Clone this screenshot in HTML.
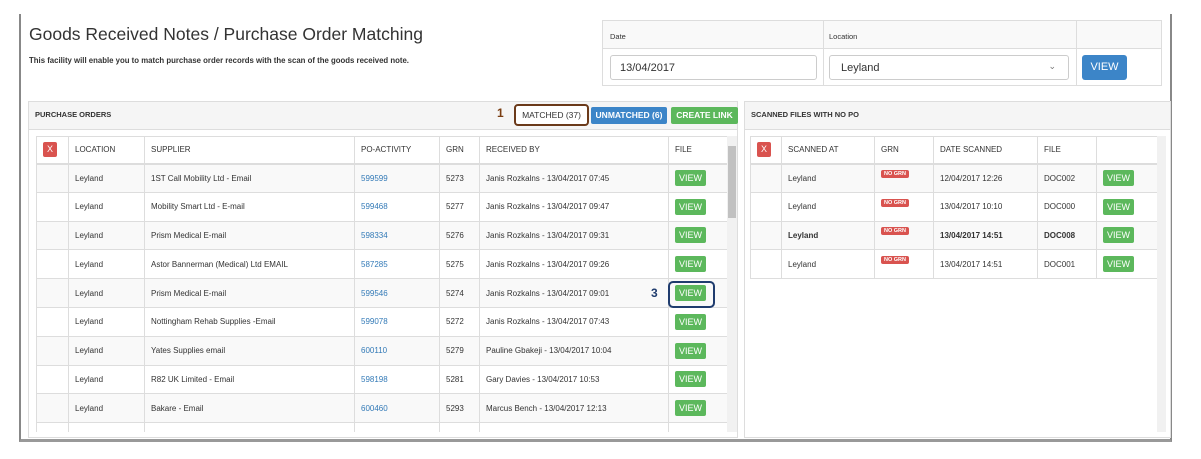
<!DOCTYPE html>
<html><head><meta charset="utf-8"><style>
*{box-sizing:border-box;margin:0;padding:0}
body{width:1201px;height:459px;background:#fff;font-family:"Liberation Sans",Arial,sans-serif;position:relative;overflow:hidden;color:#333}
.abs{position:absolute}
.frame{left:19px;top:14px;width:1153px;height:428px;border-left:2px solid #888;border-right:2px solid #888;border-bottom:3px solid #999}
h1{position:absolute;left:29px;top:24px;font-size:17.5px;font-weight:normal;color:#333}
.sub{left:29px;top:56px;font-size:7.8px;font-weight:bold;color:#333}
table{border-collapse:collapse;position:absolute;table-layout:fixed}
td{border:1px solid #ddd;font-size:8px;padding:0 6px;vertical-align:middle;height:28.8px;white-space:nowrap;overflow:hidden}
th{border:1px solid #ddd;border-bottom:2px solid #ddd;font-size:8px;font-weight:normal;text-align:left;padding:0 6px;height:27px;color:#333}
tr.s td{background:#f9f9f9}
.x{display:inline-block;width:14px;height:15px;background:#d9534f;color:#fff;border-radius:2px;text-align:center;line-height:15px;font-size:9px;font-weight:normal}
.v{display:inline-block;background:#5cb85c;color:#fff;font-size:9px;padding:3px 4px;border-radius:2px;line-height:10px;font-weight:normal}
.a{color:#337ab7}
.ng{display:inline-block;background:#d9534f;color:#fff;font-size:5.5px;font-weight:bold;padding:1px 3px;border-radius:2px;position:relative;top:-5px}
.panel{border:1px solid #ddd}
.ph{background:#f5f5f5;border-bottom:1px solid #ddd;height:28px;font-size:7.5px;font-weight:bold;padding:8px 6px 0}
.btn{position:absolute;font-size:8.5px;height:17px;line-height:17px;text-align:center;border-radius:2px}
</style></head><body>
<div class="abs frame"></div>
<h1>Goods Received Notes / Purchase Order Matching</h1>
<div class="abs sub">This facility will enable you to match purchase order records with the scan of the goods received note.</div>

<div class="abs" style="left:602px;top:20px;width:560px;height:66px;border:1px solid #ddd">
 <div class="abs" style="left:0;top:0;width:558px;height:28px;background:#f9f9f9;border-bottom:1px solid #ddd"></div>
 <div class="abs" style="left:220px;top:0;height:64px;border-left:1px solid #ddd"></div>
 <div class="abs" style="left:473px;top:0;height:64px;border-left:1px solid #ddd"></div>
 <div class="abs" style="left:7px;top:11px;font-size:7.5px">Date</div>
 <div class="abs" style="left:226px;top:11px;font-size:7.5px">Location</div>
 <div class="abs" style="left:7px;top:34px;width:207px;height:25px;border:1px solid #ccc;border-radius:3px;font-size:11px;padding:6px 9px">13/04/2017</div>
 <div class="abs" style="left:226px;top:34px;width:240px;height:25px;border:1px solid #ccc;border-radius:3px;font-size:11px;padding:6px 11px">Leyland<span style="position:absolute;right:12px;top:5px;font-size:9px;color:#777">&#8964;</span></div>
 <div class="abs" style="left:479px;top:34px;width:45px;height:25px;background:#3c85c8;border-radius:3px;color:#fff;font-size:11px;text-align:center;line-height:25px">VIEW</div>
</div>

<div class="abs panel" style="left:28px;top:101px;width:710px;height:337px">
 <div class="ph">PURCHASE ORDERS</div>
</div>
<div class="abs" style="left:497px;top:106px;font-size:12px;font-weight:bold;color:#7a3e12">1</div>
<div class="btn" style="left:514px;top:104px;width:75px;height:22px;line-height:18px;border:2px solid #6b3a1a;border-radius:4px;background:#fff;color:#333">MATCHED (37)</div>
<div class="btn" style="left:591px;top:107px;width:76px;background:#3c85c8;color:#fff;font-weight:bold">UNMATCHED (6)</div>
<div class="btn" style="left:671px;top:107px;width:67px;background:#5cb85c;color:#fff;font-weight:bold">CREATE LINK</div>

<div class="abs" style="left:36px;top:136px;width:701px;height:296px;overflow:hidden">
<table style="left:0;top:0;width:691px">
<colgroup><col style="width:32px"><col style="width:76px"><col style="width:210px"><col style="width:85px"><col style="width:40px"><col style="width:189px"><col style="width:59px"></colgroup>
<tr><th><span class="x">X</span></th><th>LOCATION</th><th>SUPPLIER</th><th>PO-ACTIVITY</th><th>GRN</th><th>RECEIVED BY</th><th>FILE</th></tr>
<tr class="s"><td></td><td>Leyland</td><td>1ST Call Mobility Ltd - Email</td><td class="a">599599</td><td>5273</td><td>Janis Rozkalns - 13/04/2017 07:45</td><td><span class="v">VIEW</span></td></tr>
<tr><td></td><td>Leyland</td><td>Mobility Smart Ltd - E-mail</td><td class="a">599468</td><td>5277</td><td>Janis Rozkalns - 13/04/2017 09:47</td><td><span class="v">VIEW</span></td></tr>
<tr class="s"><td></td><td>Leyland</td><td>Prism Medical E-mail</td><td class="a">598334</td><td>5276</td><td>Janis Rozkalns - 13/04/2017 09:31</td><td><span class="v">VIEW</span></td></tr>
<tr><td></td><td>Leyland</td><td>Astor Bannerman (Medical) Ltd EMAIL</td><td class="a">587285</td><td>5275</td><td>Janis Rozkalns - 13/04/2017 09:26</td><td><span class="v">VIEW</span></td></tr>
<tr class="s"><td></td><td>Leyland</td><td>Prism Medical E-mail</td><td class="a">599546</td><td>5274</td><td>Janis Rozkalns - 13/04/2017 09:01</td><td><span class="v">VIEW</span></td></tr>
<tr><td></td><td>Leyland</td><td>Nottingham Rehab Supplies -Email</td><td class="a">599078</td><td>5272</td><td>Janis Rozkalns - 13/04/2017 07:43</td><td><span class="v">VIEW</span></td></tr>
<tr class="s"><td></td><td>Leyland</td><td>Yates Supplies email</td><td class="a">600110</td><td>5279</td><td>Pauline Gbakeji - 13/04/2017 10:04</td><td><span class="v">VIEW</span></td></tr>
<tr><td></td><td>Leyland</td><td>R82 UK Limited - Email</td><td class="a">598198</td><td>5281</td><td>Gary Davies - 13/04/2017 10:53</td><td><span class="v">VIEW</span></td></tr>
<tr class="s"><td></td><td>Leyland</td><td>Bakare - Email</td><td class="a">600460</td><td>5293</td><td>Marcus Bench - 13/04/2017 12:13</td><td><span class="v">VIEW</span></td></tr>
<tr><td></td><td></td><td></td><td></td><td></td><td></td><td></td></tr>
</table>
<div class="abs" style="left:691px;top:0;width:10px;height:296px;background:#f1f1f1"><div style="margin:10px 1px 0;height:72px;background:#c1c1c1"></div></div>
</div>
<div class="abs" style="left:651px;top:286px;font-size:12px;font-weight:bold;color:#1f3c6e">3</div>
<div class="abs" style="left:668px;top:281px;width:47px;height:27px;border:2px solid #1f3c6e;border-radius:5px"></div>

<div class="abs panel" style="left:744px;top:101px;width:427px;height:337px">
 <div class="ph">SCANNED FILES WITH NO PO</div>
</div>
<div class="abs" style="left:750px;top:136px;width:416px;height:296px;overflow:hidden">
<table style="left:0;top:0;width:407px">
<colgroup><col style="width:31px"><col style="width:93px"><col style="width:59px"><col style="width:104px"><col style="width:59px"><col style="width:61px"></colgroup>
<tr><th><span class="x">X</span></th><th>SCANNED AT</th><th>GRN</th><th>DATE SCANNED</th><th>FILE</th><th></th></tr>
<tr class="s"><td></td><td>Leyland</td><td><span class="ng">NO GRN</span></td><td>12/04/2017 12:26</td><td>DOC002</td><td><span class="v">VIEW</span></td></tr>
<tr><td></td><td>Leyland</td><td><span class="ng">NO GRN</span></td><td>13/04/2017 10:10</td><td>DOC000</td><td><span class="v">VIEW</span></td></tr>
<tr class="s"><td></td><td><b>Leyland</b></td><td><span class="ng">NO GRN</span></td><td><b>13/04/2017 14:51</b></td><td><b>DOC008</b></td><td><span class="v">VIEW</span></td></tr>
<tr><td></td><td>Leyland</td><td><span class="ng">NO GRN</span></td><td>13/04/2017 14:51</td><td>DOC001</td><td><span class="v">VIEW</span></td></tr>
</table>
<div class="abs" style="left:407px;top:0;width:9px;height:296px;background:#f1f1f1"></div>
</div>
</body></html>
